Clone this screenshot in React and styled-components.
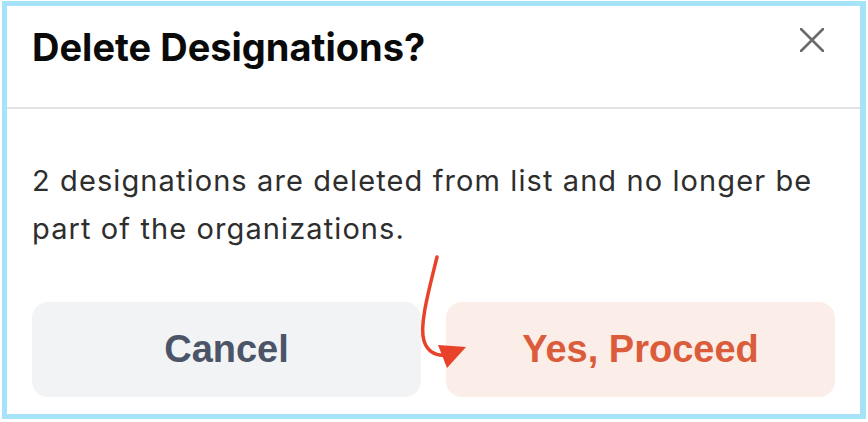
import React from 'react';
import styled, { createGlobalStyle } from 'styled-components';

const GlobalStyle = createGlobalStyle`
  * {
    box-sizing: border-box;
  }
  body {
    margin: 0;
    background: #ffffff;
    font-family: Inter, 'Noto Sans', sans-serif;
  }
`;

export default function App() {
  return (
    <Page>
      <GlobalStyle />
      <Modal>
        <Header>
          <Title>Delete Designations?</Title>
          <CloseButton aria-label="close">
            <svg width="24" height="24" viewBox="0 0 24 24">
              <path
                d="M1 1 L23 23 M23 1 L1 23"
                stroke="#6b6b6b"
                strokeWidth="2.6"
                strokeLinecap="round"
              />
            </svg>
          </CloseButton>
        </Header>
        <Body>
          <Message>
            2 designations are deleted from list and no longer be part of the
            organizations.
          </Message>
          <Actions>
            <ActionButton variant="cancel">Cancel</ActionButton>
            <ActionButton variant="proceed">Yes, Proceed</ActionButton>
          </Actions>
        </Body>
      </Modal>
      {/* hand drawn annotation arrow */}
      <Annotation width="868" height="422" viewBox="0 0 868 422">
        <path
          d="M437 257 C 429 290, 419 325, 424 341 C 428 353, 437 356, 447 355"
          fill="none"
          stroke="#e8432a"
          strokeWidth="3.5"
          strokeLinecap="round"
        />
        <polygon points="438,345 466,347 447,368" fill="#e8432a" />
      </Annotation>
    </Page>
  );
}

const Page = styled.div`
  position: relative;
  width: 868px;
  height: 422px;
  padding: 1px 2px 3px 2px;
`;

const Modal = styled.div`
  width: 864px;
  height: 418px;
  border: 5px solid #a6e2f8;
  border-right-width: 6px;
  background: #ffffff;
  display: flex;
  flex-direction: column;
`;

const Header = styled.div`
  height: 103px;
  display: flex;
  align-items: flex-start;
  justify-content: space-between;
  padding: 19px 36px 0 25px;
  border-bottom: 2px solid #e3e3e3;
`;

const Title = styled.h2`
  margin: 0;
  font-family: Inter, 'Noto Sans', sans-serif;
  font-weight: 700;
  font-size: 38px;
  line-height: 44px;
  color: #0a0a0a;
`;

const CloseButton = styled.button`
  border: none;
  background: none;
  padding: 0;
  margin-top: 3px;
  width: 24px;
  height: 24px;
  display: flex;
  cursor: pointer;
`;

const Body = styled.div`
  flex: 1;
  display: flex;
  flex-direction: column;
  padding: 48px 25px 17px 25px;
`;

const Message = styled.p`
  margin: 0;
  font-family: Inter, 'Noto Sans', sans-serif;
  font-size: 29px;
  letter-spacing: 1.1px;
  line-height: 48px;
  color: #2e2e2e;
`;

const Actions = styled.div`
  margin-top: auto;
  display: grid;
  grid-template-columns: 1fr 1fr;
  gap: 25px;
`;

const ActionButton = styled.button`
  height: 95px;
  border: none;
  border-radius: 16px;
  font-family: 'Liberation Sans', Arial, sans-serif;
  font-weight: 700;
  font-size: 38px;
  cursor: pointer;
  background: ${({ variant }) => (variant === 'proceed' ? '#fbede7' : '#f2f3f5')};
  color: ${({ variant }) => (variant === 'proceed' ? '#db5c3b' : '#4b5567')};
`;

const Annotation = styled.svg`
  position: absolute;
  top: 0;
  left: 0;
  pointer-events: none;
`;
